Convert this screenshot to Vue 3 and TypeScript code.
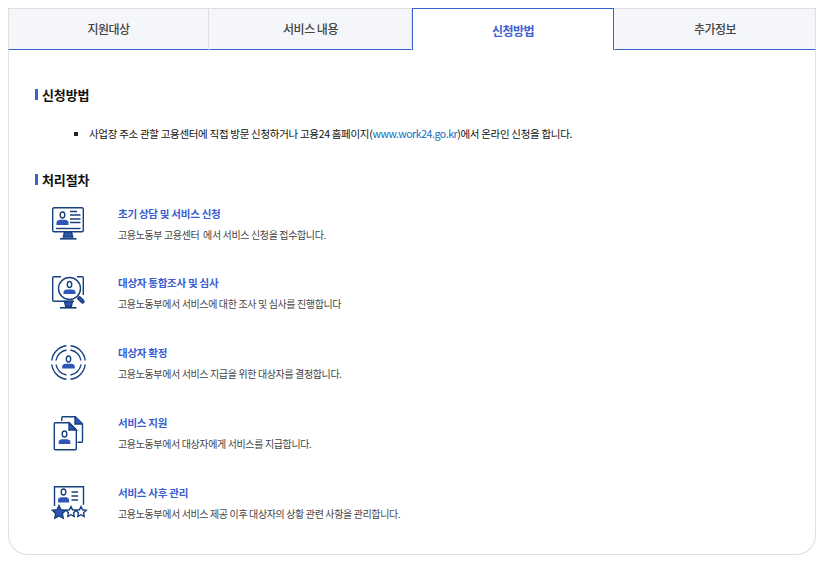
<script setup lang="ts">
const tabs: string[] = ['지원대상', '서비스 내용', '신청방법', '추가정보']
const active = 2
const steps: { title: string; desc: string; icon: string }[] = [
  { title: '초기 상담 및 서비스 신청', desc: '고용노동부 고용센터  에서 서비스 신청을 접수합니다.', icon: 'monitor' },
  { title: '대상자 통합조사 및 심사', desc: '고용노동부에서 서비스에 대한 조사 및 심사를 진행합니다', icon: 'search' },
  { title: '대상자 확정', desc: '고용노동부에서 서비스 지급을 위한 대상자를 결정합니다.', icon: 'target' },
  { title: '서비스 지원', desc: '고용노동부에서 대상자에게 서비스를 지급합니다.', icon: 'docs' },
  { title: '서비스 사후 관리', desc: '고용노동부에서 서비스 제공 이후 대상자의 상황 관련 사항을 관리합니다.', icon: 'stars' },
]
</script>

<template>
  <div class="page">
    <div class="card">
      <div class="tabs">
        <div v-for="(t, i) in tabs" :key="t" class="tab" :class="{ on: i === active, last: i === tabs.length - 1 }">{{ t }}</div>
      </div>
      <div class="body">
        <h3 class="head first">신청방법</h3>
        <ul class="list">
          <li>사업장 주소 관할 고용센터에 직접 방문 신청하거나 고용24 홈페이지(<span class="link">www.work24.go.kr</span>)에서 온라인 신청을 합니다.</li>
        </ul>
        <h3 class="head second">처리절차</h3>
        <div class="steps">
          <div v-for="s in steps" :key="s.title" class="step">
            <svg class="icon" viewBox="0 0 60 60" width="60" height="60" fill="none" stroke="#17407e" stroke-width="1.4">
              <template v-if="s.icon === 'monitor'">
                <rect x="12.7" y="12.7" width="30.6" height="24" rx="1.5" />
                <line x1="16" y1="33.5" x2="40.5" y2="33.5" />
                <path d="M24.5 37h7l1.2 5h-9.400z" fill="#2f55b5" />
                <path d="M20 43.800H36.500" stroke-width="1.600" />
                <ellipse cx="22.500" cy="20" rx="2.300" ry="3" />
                <path d="M16.500 30v-2.500c0-1.800 2-2.500 3.500-2.700h5c1.500.2 3.500.9 3.500 2.700v2.500z" fill="#2f55b5" stroke="none" />
                <path d="M30 16.500h7M30 20h10.500M30 24h10.500M30 27.500h10.500" />
              </template>
              <template v-else-if="s.icon === 'search'">
                <path d="M21 12.700h-7c-.8 0-1.300.5-1.300 1.300v22c0 .8.500 1.300 1.300 1.300h20M37 12.700h5c.8 0 1.300.5 1.300 1.300v17" />
                <circle cx="29.500" cy="24.500" r="11" />
                <path d="M37.500 32.500l1.500 1.500" />
                <path d="M37.800 34.800l2-2 3.800 3.800c.6.600.6 1.400 0 2-.6.600-1.400.6-2 0z" fill="#2f55b5" />
                <ellipse cx="29.500" cy="20.500" rx="2.200" ry="3" />
                <path d="M23.500 30v-2c0-1.600 1.700-2.300 3.300-2.500h5.400c1.600.2 3.300.9 3.300 2.500v2z" fill="#2f55b5" stroke="none" />
                <path d="M24.500 37.500l1.200 5h5.600l1.200-5z" fill="#2f55b5" />
                <path d="M20 43.800H36.500" stroke-width="1.600" />
              </template>
              <template v-else-if="s.icon === 'target'">
                <path d="M26.500 11.800A16.800 16.800 0 0 0 11.800 26.500M11.800 30.500A16.800 16.800 0 0 0 26.500 45.200M30.500 45.200A16.800 16.800 0 0 0 45.200 30.500M45.200 26.500A16.800 16.800 0 0 0 30.500 11.800" />
                <path d="M26.500 16A12.600 12.600 0 0 0 16 26.500M16 30.500A12.600 12.600 0 0 0 26.500 41M30.500 41A12.600 12.600 0 0 0 41 30.500M41 26.500A12.600 12.600 0 0 0 30.500 16" />
                <ellipse cx="28.500" cy="25" rx="2.200" ry="3" />
                <path d="M22.200 34.500v-2c0-1.700 1.800-2.500 3.500-2.700h5.600c1.700.2 3.500 1 3.500 2.700v2z" fill="#2f55b5" stroke="none" />
              </template>
              <template v-else-if="s.icon === 'docs'">
                <path d="M21.800 17v-3.200c0-.6.400-1 1-1h12.500l7.200 7v17.400c0 .6-.4 1-1 1h-4" />
                <path d="M35 13v7h7.500" fill="#2f55b5" />
                <path d="M15.300 18.800h14l7 7v19c0 .6-.4 1-1 1H15.300c-.6 0-1-.4-1-1v-25c0-.6.400-1 1-1z" fill="#fff" />
                <path d="M29 19v7h7.300z" fill="#2f55b5" />
                <ellipse cx="24.500" cy="30" rx="2.300" ry="3" />
                <path d="M18.700 40v-2c0-1.700 1.800-2.500 3.500-2.700h4.700c1.700.2 3.500 1 3.500 2.700v2z" fill="#2f55b5" stroke="none" />
              </template>
              <template v-else>
                <path d="M14.500 32V12.700h29v18" />
                <ellipse cx="23.500" cy="18" rx="2.300" ry="3" />
                <path d="M18 28.500v-2.500c0-1.800 1.800-2.500 3.300-2.700h4.500c1.500.2 3.300.9 3.300 2.700v2.500z" fill="#2f55b5" stroke="none" />
                <path d="M31.500 18h6.500M31.500 22h6.500M31.500 26h6.500" />
                <path d="M19 31.500l2 4.200 4.700.6-3.400 3.200.9 4.600-4.200-2.300-4.200 2.300.9-4.600-3.400-3.200 4.700-.6z" fill="#2f55b5" />
                <path d="M31 32.500l1.600 3.300 3.600.5-2.600 2.500.6 3.600-3.200-1.700-3.200 1.700.6-3.600-2.600-2.500 3.600-.5z" fill="#fff" />
                <path d="M41 32.500l1.600 3.300 3.600.5-2.600 2.500.6 3.600-3.200-1.700-3.200 1.700.6-3.600-2.600-2.500 3.600-.5z" fill="#fff" />
              </template>
            </svg>
            <div class="txt">
              <div class="title">{{ s.title }}</div>
              <div class="desc">{{ s.desc }}</div>
            </div>
          </div>
        </div>
      </div>
    </div>
  </div>
</template>

<style>
html, body { background: #fff; }
</style>

<style scoped>
.page {
  width: 821px;
  height: 561px;
  box-sizing: border-box;
  padding: 8px 5px 6px 8px;
  font-family: "Noto Sans CJK KR", "Noto Sans", sans-serif;
  overflow: hidden;
}
.card {
  height: 547px;
  box-sizing: border-box;
  border: 1px solid #dfdfdf;
  border-top: 0;
  border-radius: 0 0 20px 20px;
}
.tabs {
  display: grid;
  grid-template-columns: 201px 203px 202px 1fr;
  height: 42px;
  margin: 0 -1px;
}
.tab {
  box-sizing: border-box;
  background: #f5f6fa;
  border-top: 1px solid #dfdfdf;
  border-right: 1px solid #dfdfdf;
  border-bottom: 1px solid #3a62d0;
  border-left: 1px solid transparent;
  display: flex;
  align-items: center;
  justify-content: center;
  padding-bottom: 1px;
  font-size: 12px;
  font-weight: 500;
  letter-spacing: -0.5px;
  color: #444;
}
.tab:first-child { border-left-color: #dfdfdf; }
.tab.last { border-right-color: #dfdfdf; }
.tab.on {
  background: #fff;
  border: 1px solid #3a62d0;
  border-bottom: 0;
  color: #3a62d0;
  font-weight: 700;
  padding: 1px 0 0;
}
.body { padding: 0 0 0 26px; }
.head {
  margin: 0;
  font-size: 13px;
  line-height: 18px;
  font-weight: 700;
  letter-spacing: -0.1px;
  color: #111;
  display: flex;
  align-items: center;
}
.head::before {
  content: "";
  width: 3px;
  height: 11px;
  background: #3a62d0;
  margin: -1px 4px 0 0;
}
.head.first { padding-top: 36px; }
.head.second { margin-top: 29px; }
.list {
  margin: 22px 0 0;
  padding: 0 0 0 54px;
  list-style: none;
}
.list li {
  position: relative;
  font-size: 10.500px;
  line-height: 16px;
  color: #111;
  letter-spacing: -0.3px;
}
.list li::before {
  content: "";
  position: absolute;
  left: -15px;
  top: 6px;
  width: 4px;
  height: 4px;
  background: #222;
}
.steps {
  margin: 5.600px 0 0 5px;
  display: flex;
  flex-direction: column;
  gap: 9.750px;
}
.step {
  display: flex;
  height: 60px;
  gap: 18px;
}
.icon { flex: none; }
.txt { padding-top: 10px; }
.title {
  font-size: 10.500px;
  line-height: 18px;
  font-weight: 700;
  color: #3a5cd0;
  letter-spacing: -0.26px;
}
.desc {
  margin-top: 4px;
  font-size: 10px;
  line-height: 16px;
  color: #444;
  letter-spacing: -0.37px;
  white-space: pre-wrap;
}
.link { color: #0a6cc4; letter-spacing: -0.42px; }
</style>
